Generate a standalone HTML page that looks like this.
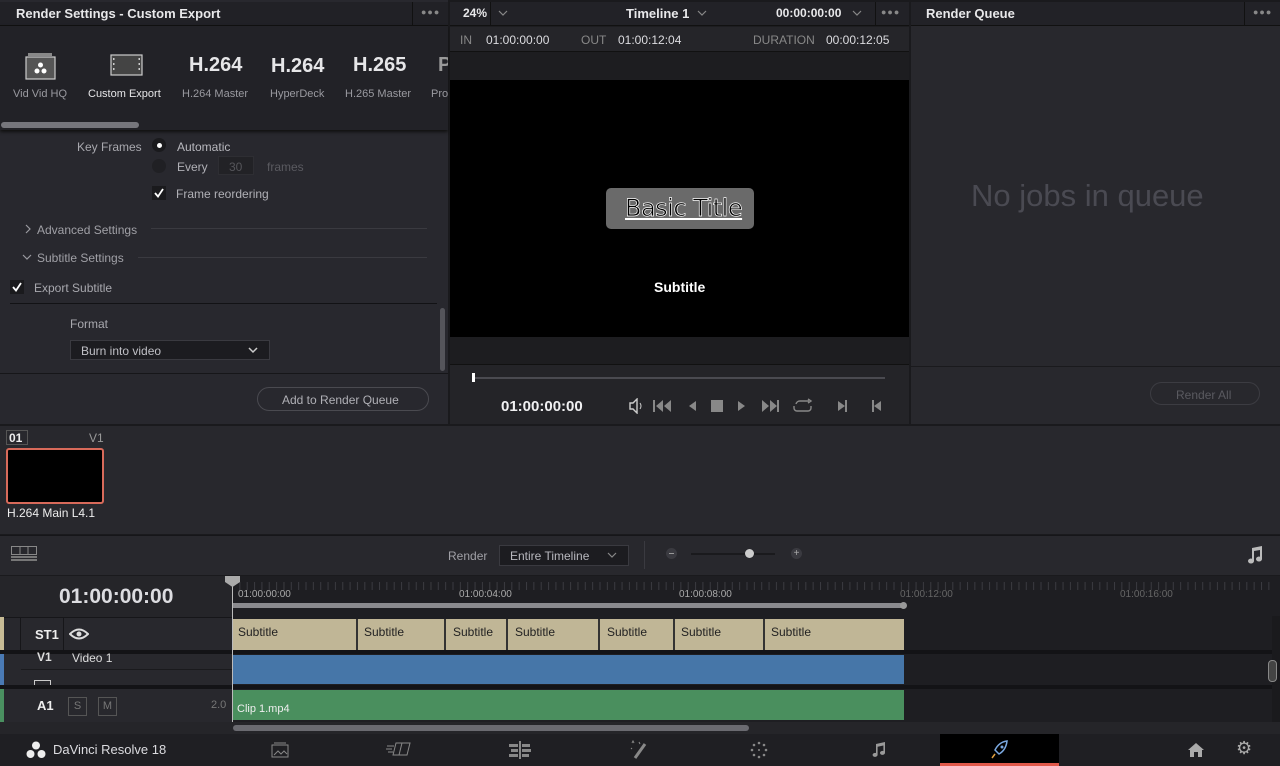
<!DOCTYPE html>
<html><head><meta charset="utf-8"><style>
*{margin:0;padding:0;box-sizing:border-box}
body{width:1280px;height:766px;overflow:hidden;background:#1a1a1d;font-family:"Liberation Sans",sans-serif;color:#c8c8cc;position:relative;font-size:12px}
.a{position:absolute}
.t{position:absolute;white-space:nowrap}
</style></head><body>
<!-- left panel -->
<div class="a" style="left:0;top:0;width:448px;height:424px;background:#28282e"></div>
<div class="a" style="left:0;top:2px;width:448px;height:24px;background:#212126;border-bottom:1px solid #111"></div>
<div class="t" style="left:16px;top:6px;font-size:13px;font-weight:bold;color:#e8e8ea">Render Settings - Custom Export</div>
<div class="a" style="left:412px;top:2px;width:1px;height:24px;background:#111"></div>
<div class="t" style="left:421px;top:7px;color:#888;font-size:9px;letter-spacing:1px">●●●</div>
<div class="a" style="left:0;top:26px;width:448px;height:104px;background:#222227;box-shadow:0 2px 3px #111"></div>
<svg class="a" style="left:25px;top:52px" width="32" height="28"><rect x="3" y="1" width="24" height="3" fill="#888"/><rect x="1" y="5" width="29" height="22" fill="#555" stroke="#ccc" stroke-width="1.2"/><circle cx="15.5" cy="13" r="2.5" fill="#fff"/><circle cx="12" cy="19" r="2.5" fill="#fff"/><circle cx="19" cy="19" r="2.5" fill="#fff"/></svg>
<svg class="a" style="left:110px;top:54px" width="34" height="22"><rect x="1" y="1" width="31" height="20" fill="#444" stroke="#ccc" stroke-width="1.2"/><g fill="#ccc"><rect x="3" y="4" width="1.5" height="2"/><rect x="3" y="9" width="1.5" height="2"/><rect x="3" y="14" width="1.5" height="2"/><rect x="28.5" y="4" width="1.5" height="2"/><rect x="28.5" y="9" width="1.5" height="2"/><rect x="28.5" y="14" width="1.5" height="2"/></g></svg>
<div class="t" style="left:13px;top:88px;font-size:11px;color:#9a9aa0">Vid Vid HQ</div>
<div class="t" style="left:88px;top:88px;font-size:11px;color:#e6e6e8">Custom Export</div>
<div class="t" style="left:189px;top:54px;font-size:20px;color:#e6e6e8;font-weight:bold">H.264</div>
<div class="t" style="left:182px;top:88px;font-size:11px;color:#9a9aa0">H.264 Master</div>
<div class="t" style="left:271px;top:55px;font-size:20px;color:#e6e6e8;font-weight:bold">H.264</div>
<div class="t" style="left:270px;top:88px;font-size:11px;color:#9a9aa0">HyperDeck</div>
<div class="t" style="left:353px;top:54px;font-size:20px;color:#e6e6e8;font-weight:bold">H.265</div>
<div class="t" style="left:345px;top:88px;font-size:11px;color:#9a9aa0">H.265 Master</div>
<div class="t" style="left:438px;top:54px;font-size:20px;color:#999;font-weight:bold;width:10px;overflow:hidden">P</div>
<div class="t" style="left:431px;top:88px;font-size:11px;color:#9a9aa0;width:17px;overflow:hidden">Pro</div>
<div class="a" style="left:1px;top:122px;width:138px;height:6px;border-radius:3px;background:#76767c"></div>
<div class="t" style="left:77px;top:140px;color:#a8a8ae">Key Frames</div>
<div class="a" style="left:152px;top:138px;width:14px;height:14px;border-radius:50%;background:#1a1a1d"></div>
<div class="a" style="left:157px;top:143px;width:5px;height:5px;border-radius:50%;background:#fff"></div>
<div class="t" style="left:177px;top:140px;color:#b8b8be">Automatic</div>
<div class="a" style="left:152px;top:159px;width:14px;height:14px;border-radius:50%;background:#202024"></div>
<div class="t" style="left:177px;top:160px;color:#b0b0b6">Every</div>
<div class="a" style="left:218px;top:156px;width:36px;height:19px;background:#222226;border:1px solid #2e2e33"></div>
<div class="t" style="left:229px;top:160px;color:#55555a">30</div>
<div class="t" style="left:267px;top:160px;color:#5a5a60">frames</div>
<div class="a" style="left:152px;top:186px;width:14px;height:14px;background:#1a1a1d"></div>
<svg class="a" style="left:153px;top:187px" width="12" height="12"><path d="M2 6 L5 9.5 L10 2" stroke="#fff" stroke-width="1.8" fill="none"/></svg>
<div class="t" style="left:176px;top:187px;color:#b0b0b6">Frame reordering</div>
<svg class="a" style="left:24px;top:224px" width="8" height="10"><path d="M2 1 L6 5 L2 9" stroke="#9a9aa0" stroke-width="1.2" fill="none"/></svg>
<div class="t" style="left:37px;top:223px;color:#a0a0a6">Advanced Settings</div>
<div class="a" style="left:151px;top:228px;width:276px;height:1px;background:#3a3a40"></div>
<svg class="a" style="left:22px;top:253px" width="10" height="8"><path d="M1 2 L5 6 L9 2" stroke="#9a9aa0" stroke-width="1.2" fill="none"/></svg>
<div class="t" style="left:37px;top:251px;color:#a0a0a6">Subtitle Settings</div>
<div class="a" style="left:138px;top:257px;width:289px;height:1px;background:#3a3a40"></div>
<div class="a" style="left:10px;top:280px;width:14px;height:14px;background:#1a1a1d"></div>
<svg class="a" style="left:11px;top:281px" width="12" height="12"><path d="M2 6 L5 9.5 L10 2" stroke="#fff" stroke-width="1.8" fill="none"/></svg>
<div class="t" style="left:34px;top:281px;color:#a8a8ae">Export Subtitle</div>
<div class="a" style="left:10px;top:303px;width:427px;height:1px;background:#121215"></div>
<div class="t" style="left:70px;top:317px;color:#a8a8ae">Format</div>
<div class="a" style="left:70px;top:340px;width:200px;height:20px;background:#1c1c20;border:1px solid #3a3a40"></div>
<div class="t" style="left:81px;top:344px;color:#c0c0c6">Burn into video</div>
<svg class="a" style="left:248px;top:346px" width="10" height="8"><path d="M1 2 L5 6 L9 2" stroke="#ccc" stroke-width="1.5" fill="none"/></svg>
<div class="a" style="left:440px;top:308px;width:5px;height:63px;border-radius:3px;background:#55555b"></div>
<div class="a" style="left:0;top:373px;width:448px;height:1px;background:#161619"></div>
<div class="a" style="left:257px;top:387px;width:172px;height:24px;border:1px solid #4a4a50;border-radius:12px"></div>
<div class="t" style="left:282px;top:393px;color:#b0b0b6">Add to Render Queue</div>

<!-- viewer -->
<div class="a" style="left:450px;top:2px;width:459px;height:422px;background:#1d1d20"></div>
<div class="a" style="left:450px;top:2px;width:459px;height:24px;background:#222227;border-bottom:1px solid #111"></div>
<div class="t" style="left:463px;top:6px;color:#e8e8ea;font-weight:bold">24%</div>
<svg class="a" style="left:498px;top:10px" width="10" height="7"><path d="M1 1 L5 5 L9 1" stroke="#888" stroke-width="1.2" fill="none"/></svg>
<div class="a" style="left:490px;top:2px;width:1px;height:24px;background:#111"></div>
<div class="t" style="left:626px;top:6px;color:#e8e8ea;font-weight:bold;font-size:13px">Timeline 1</div>
<svg class="a" style="left:697px;top:10px" width="10" height="7"><path d="M1 1 L5 5 L9 1" stroke="#888" stroke-width="1.2" fill="none"/></svg>
<div class="t" style="left:776px;top:6px;color:#e8e8ea;font-weight:bold">00:00:00:00</div>
<svg class="a" style="left:852px;top:10px" width="10" height="7"><path d="M1 1 L5 5 L9 1" stroke="#888" stroke-width="1.2" fill="none"/></svg>
<div class="a" style="left:875px;top:2px;width:1px;height:24px;background:#111"></div>
<div class="t" style="left:881px;top:7px;color:#888;font-size:9px;letter-spacing:1px">●●●</div>
<div class="a" style="left:450px;top:27px;width:459px;height:25px;background:#252529;border-bottom:1px solid #111"></div>
<div class="t" style="left:460px;top:33px;color:#888">IN</div>
<div class="t" style="left:486px;top:33px;color:#dcdce0">01:00:00:00</div>
<div class="t" style="left:581px;top:33px;color:#888">OUT</div>
<div class="t" style="left:618px;top:33px;color:#dcdce0">01:00:12:04</div>
<div class="t" style="left:753px;top:33px;color:#888">DURATION</div>
<div class="t" style="left:826px;top:33px;color:#dcdce0">00:00:12:05</div>
<div class="a" style="left:450px;top:80px;width:459px;height:257px;background:#000"></div>
<div class="a" style="left:606px;top:188px;width:148px;height:41px;border-radius:5px;background:#6a6a6a"></div>
<div class="t" style="left:625px;top:194px;font-size:24px;color:#000;-webkit-text-stroke:0.7px #fff;text-decoration:underline;font-family:'DejaVu Sans',sans-serif;letter-spacing:-0.5px">Basic Title</div>
<div class="t" style="left:654px;top:279px;font-size:14px;color:#fff;font-weight:bold">Subtitle</div>
<div class="a" style="left:450px;top:364px;width:459px;height:60px;background:#242428;border-top:1px solid #111"></div>
<div class="a" style="left:475px;top:377px;width:410px;height:2px;background:#4a4a50"></div>
<div class="a" style="left:472px;top:373px;width:3px;height:9px;background:#fff"></div>
<div class="t" style="left:501px;top:398px;color:#f0f0f2;font-size:15px;font-weight:bold">01:00:00:00</div>
<svg class="a" style="left:628px;top:398px" width="262" height="16" fill="#888">
<path d="M2 5 h3 l4 -4 v14 l-4 -4 h-3z" fill="none" stroke="#ccc" stroke-width="1.4"/><path d="M12 5 q2 3 0 6" stroke="#ccc" fill="none"/>
<rect x="25" y="2" width="2" height="12"/><path d="M35 2 v12 l-7 -6z M43 2 v12 l-7 -6z"/>
<path d="M68 3 v10 l-7 -5z"/>
<rect x="83" y="2" width="12" height="12"/>
<path d="M110 3 v10 l7 -5z"/>
<path d="M134 2 v12 l7 -6z M142 2 v12 l7 -6z"/><rect x="149" y="2" width="2" height="12"/>
<path d="M168 6 a4 4 0 0 1 4 -3 h9 M180 1 l3 2 -3 2 M166 8 v2 a3 3 0 0 0 3 3 h11 a3 3 0 0 0 3 -3 v-2" stroke="#888" stroke-width="1.4" fill="none"/>
<path d="M210 3 v10 l7 -5z"/><rect x="217" y="2" width="2" height="12"/>
<rect x="244" y="2" width="2" height="12"/><path d="M253 3 v10 l-7 -5z"/>
</svg>

<!-- render queue -->
<div class="a" style="left:911px;top:2px;width:369px;height:422px;background:#28282d"></div>
<div class="a" style="left:911px;top:2px;width:369px;height:24px;background:#222227;border-bottom:1px solid #111"></div>
<div class="t" style="left:926px;top:6px;color:#e8e8ea;font-weight:bold;font-size:13px">Render Queue</div>
<div class="a" style="left:1244px;top:2px;width:1px;height:24px;background:#111"></div>
<div class="t" style="left:1253px;top:7px;color:#888;font-size:9px;letter-spacing:1px">●●●</div>
<div class="t" style="left:971px;top:178px;font-size:31px;color:#4a4a52">No jobs in queue</div>
<div class="a" style="left:911px;top:366px;width:369px;height:1px;background:#1a1a1d"></div>
<div class="a" style="left:1150px;top:382px;width:110px;height:23px;border:1px solid #3c3c42;border-radius:12px"></div>
<div class="t" style="left:1176px;top:388px;color:#5a5a60">Render All</div>

<!-- clips strip -->
<div class="a" style="left:0;top:426px;width:1280px;height:108px;background:#28282d"></div>
<div class="a" style="left:6px;top:430px;width:22px;height:15px;border:1px solid #555"></div>
<div class="t" style="left:9px;top:431px;color:#eee;font-weight:bold">01</div>
<div class="t" style="left:89px;top:431px;color:#999">V1</div>
<div class="a" style="left:6px;top:448px;width:98px;height:56px;background:#000;border:2px solid #d86a5a;border-radius:3px"></div>
<div class="t" style="left:7px;top:506px;color:#eee">H.264 Main L4.1</div>

<!-- timeline toolbar -->
<div class="a" style="left:0;top:535px;width:1280px;height:40px;background:#28282d;border-top:1px solid #161619"></div>
<svg class="a" style="left:11px;top:546px" width="26" height="16"><rect x="0.5" y="0.5" width="25" height="8" fill="none" stroke="#888"/><line x1="9" y1="0" x2="9" y2="8" stroke="#888"/><line x1="17" y1="0" x2="17" y2="8" stroke="#888"/><rect x="0" y="10" width="26" height="2" fill="#777"/><rect x="0" y="13" width="26" height="2" fill="#777"/></svg>
<div class="t" style="left:448px;top:549px;color:#a0a0a6">Render</div>
<div class="a" style="left:499px;top:545px;width:130px;height:21px;background:#1c1c20;border:1px solid #3a3a40"></div>
<div class="t" style="left:510px;top:549px;color:#b8b8be">Entire Timeline</div>
<svg class="a" style="left:607px;top:552px" width="10" height="7"><path d="M1 1 L5 5 L9 1" stroke="#888" stroke-width="1.2" fill="none"/></svg>
<div class="a" style="left:644px;top:541px;width:1px;height:28px;background:#3a3a40"></div>
<div class="a" style="left:666px;top:548px;width:11px;height:11px;border-radius:50%;background:#3a3a40"></div>
<div class="a" style="left:669px;top:553px;width:5px;height:1px;background:#999"></div>
<div class="a" style="left:691px;top:553px;width:84px;height:2px;background:#1a1a1d"></div>
<div class="a" style="left:745px;top:549px;width:9px;height:9px;border-radius:50%;background:#ccc"></div>
<div class="a" style="left:791px;top:548px;width:11px;height:11px;border-radius:50%;background:#3a3a40;color:#aaa;font-size:10px;text-align:center;line-height:11px">+</div>
<svg class="a" style="left:1246px;top:546px" width="18" height="18" fill="#bbb"><path d="M6 2 L16 0 V13 a3 2.5 0 1 1 -2 -2.3 V4 L8 5 V15 a3 2.5 0 1 1 -2 -2.3z"/></svg>

<!-- timeline -->
<div class="a" style="left:0;top:576px;width:232px;height:150px;background:#252529"></div>
<div class="t" style="left:59px;top:585px;font-size:21px;color:#dcdce0;font-weight:bold">01:00:00:00</div>
<div class="a" style="left:232px;top:576px;width:1048px;height:40px;background:#1e1e22"></div>
<svg class="a" style="left:232px;top:576px" width="1040" height="16">
<pattern id="tk" width="7.35" height="16" patternUnits="userSpaceOnUse"><line x1="0.5" y1="6" x2="0.5" y2="14" stroke="#3a3a40"/></pattern><rect width="1040" height="16" fill="url(#tk)"/></svg>
<div class="t" style="left:238px;top:589px;font-size:10px;color:#aaa">01:00:00:00</div>
<div class="t" style="left:459px;top:589px;font-size:10px;color:#aaa">01:00:04:00</div>
<div class="t" style="left:679px;top:589px;font-size:10px;color:#aaa">01:00:08:00</div>
<div class="t" style="left:900px;top:589px;font-size:10px;color:#666">01:00:12:00</div>
<div class="t" style="left:1120px;top:589px;font-size:10px;color:#666">01:00:16:00</div>
<div class="a" style="left:232px;top:603px;width:672px;height:5px;background:#8a8a8e"></div>
<div class="a" style="left:900px;top:602px;width:7px;height:7px;border-radius:50%;background:#999"></div>
<div class="a" style="left:232px;top:616px;width:1040px;height:110px;background:#1e1e22"></div>
<div class="a" style="left:0;top:617px;width:232px;height:33px;background:#28282d;border-top:1px solid #161619"></div>
<div class="a" style="left:0;top:617px;width:4px;height:33px;background:#c8bc96"></div>
<div class="a" style="left:20px;top:617px;width:1px;height:108px;background:#161619"></div>
<div class="a" style="left:63px;top:617px;width:1px;height:108px;background:#161619"></div>
<div class="t" style="left:35px;top:627px;color:#eee;font-weight:bold;font-size:13px">ST1</div>
<svg class="a" style="left:69px;top:627px" width="20" height="14"><path d="M1 7 Q10 -2 19 7 Q10 16 1 7z" fill="none" stroke="#ddd" stroke-width="2"/><circle cx="10" cy="7" r="2.5" fill="#ddd"/></svg>
<div class="a" style="left:0;top:650px;width:1272px;height:4px;background:#131316"></div>
<div class="a" style="left:0;top:654px;width:232px;height:31px;background:#28282d;overflow:hidden"></div>
<div class="a" style="left:0;top:654px;width:4px;height:31px;background:#4a7ab4"></div>
<div class="t" style="left:37px;top:650px;color:#ddd;font-weight:bold">V1</div>
<div class="t" style="left:72px;top:651px;color:#ddd">Video 1</div>
<div class="a" style="left:21px;top:669px;width:211px;height:1px;background:#1a1a1d"></div>
<div class="a" style="left:34px;top:680px;width:17px;height:5px;border:1px solid #ccc;border-bottom:none"></div>
<div class="a" style="left:0;top:685px;width:1272px;height:4px;background:#131316"></div>
<div class="a" style="left:0;top:689px;width:232px;height:33px;background:#28282d"></div>
<div class="a" style="left:0;top:689px;width:4px;height:33px;background:#4a9060"></div>
<div class="t" style="left:37px;top:698px;color:#eee;font-weight:bold;font-size:13px">A1</div>
<div class="a" style="left:68px;top:697px;width:19px;height:19px;border:1px solid #555;color:#777;font-size:11px;text-align:center;line-height:17px">S</div>
<div class="a" style="left:98px;top:697px;width:19px;height:19px;border:1px solid #555;color:#777;font-size:11px;text-align:center;line-height:17px">M</div>
<div class="t" style="left:211px;top:699px;color:#777;font-size:11px">2.0</div>
<!-- clips -->
<div class="a" style="left:233px;top:619px;width:671px;height:31px;background:#c0b696"></div>
<div class="a" style="left:356px;top:619px;width:2px;height:31px;background:#333"></div>
<div class="a" style="left:444px;top:619px;width:2px;height:31px;background:#333"></div>
<div class="a" style="left:506px;top:619px;width:2px;height:31px;background:#333"></div>
<div class="a" style="left:598px;top:619px;width:2px;height:31px;background:#333"></div>
<div class="a" style="left:673px;top:619px;width:2px;height:31px;background:#333"></div>
<div class="a" style="left:763px;top:619px;width:2px;height:31px;background:#333"></div>
<div class="t" style="left:238px;top:625px;color:#222">Subtitle</div>
<div class="t" style="left:364px;top:625px;color:#222">Subtitle</div>
<div class="t" style="left:453px;top:625px;color:#222">Subtitle</div>
<div class="t" style="left:515px;top:625px;color:#222">Subtitle</div>
<div class="t" style="left:607px;top:625px;color:#222">Subtitle</div>
<div class="t" style="left:681px;top:625px;color:#222">Subtitle</div>
<div class="t" style="left:771px;top:625px;color:#222">Subtitle</div>
<div class="a" style="left:233px;top:655px;width:671px;height:29px;background:#4676a8"></div>
<div class="a" style="left:233px;top:690px;width:671px;height:30px;background:#4a8f5e"></div>
<div class="t" style="left:237px;top:703px;color:#eee;font-size:11px">Clip 1.mp4</div>
<div class="a" style="left:232px;top:576px;width:1px;height:150px;background:#bbb"></div>
<svg class="a" style="left:225px;top:576px" width="16" height="12"><path d="M0 0 H15 V6 L7.5 11 L0 6z" fill="#aaa"/></svg>
<div class="a" style="left:1268px;top:660px;width:9px;height:22px;border:1px solid #888;border-radius:4px;background:#444"></div>
<div class="a" style="left:0;top:722px;width:1280px;height:12px;background:#252529"></div>
<div class="a" style="left:233px;top:725px;width:516px;height:6px;border-radius:3px;background:#6a6a70"></div>

<!-- bottom bar -->
<div class="a" style="left:0;top:734px;width:1280px;height:32px;background:#1f1f23"></div>
<svg class="a" style="left:26px;top:741px" width="20" height="18" fill="#eee"><circle cx="10" cy="4.5" r="4"/><circle cx="4.5" cy="13" r="4"/><circle cx="15.5" cy="13" r="4"/></svg>
<div class="t" style="left:53px;top:742px;color:#dcdce0;font-size:13px">DaVinci Resolve 18</div>
<svg class="a" style="left:271px;top:742px" width="18" height="16"><rect x="1" y="3" width="16" height="12" fill="none" stroke="#888"/><line x1="3" y1="1" x2="15" y2="1" stroke="#888"/><path d="M3 13 l4 -4 3 3 3 -3 3 3" stroke="#888" fill="none"/></svg>
<svg class="a" style="left:386px;top:741px" width="26" height="16"><path d="M10 2 h14 l-3 12 h-14z M16 2 l-3 12" stroke="#888" fill="none"/><path d="M1 5 h7 M0 8 h6 M2 11 h5" stroke="#888"/></svg>
<svg class="a" style="left:509px;top:741px" width="22" height="18" fill="#888"><rect x="10" y="0" width="2" height="18"/><rect x="0" y="3" width="9" height="3"/><rect x="13" y="3" width="8" height="3"/><rect x="2" y="8" width="7" height="3"/><rect x="13" y="8" width="9" height="3"/><rect x="0" y="13" width="9" height="3"/><rect x="13" y="13" width="7" height="3"/></svg>
<svg class="a" style="left:628px;top:740px" width="22" height="20"><path d="M17 4 L7 18" stroke="#888" stroke-width="3"/><path d="M4 3 l1 -2 1 2 M11 2 l1 2 M3 8 l1 1" stroke="#888"/></svg>
<svg class="a" style="left:749px;top:740px" width="20" height="20" fill="#888"><circle cx="10" cy="3" r="1.3"/><circle cx="15" cy="5" r="1.3"/><circle cx="17" cy="10" r="1.3"/><circle cx="15" cy="15" r="1.3"/><circle cx="10" cy="17" r="1.3"/><circle cx="5" cy="15" r="1.3"/><circle cx="3" cy="10" r="1.3"/><circle cx="5" cy="5" r="1.3"/><circle cx="10" cy="10" r="1"/></svg>
<svg class="a" style="left:872px;top:742px" width="14" height="16" fill="#999"><path d="M4 2 L13 0 V11 a2.5 2 0 1 1 -1.6 -2 V3.5 L5.6 4.8 V13 a2.5 2 0 1 1 -1.6 -2z"/></svg>
<div class="a" style="left:940px;top:734px;width:119px;height:32px;background:#000"></div>
<div class="a" style="left:940px;top:763px;width:119px;height:3px;background:#e0584a"></div>
<svg class="a" style="left:989px;top:740px" width="20" height="20"><path d="M18 1 Q10 2 6 10 L10 14 Q17 10 18 1z" fill="none" stroke="#7aa8e0" stroke-width="1.5"/><circle cx="13" cy="7" r="1.5" fill="#7aa8e0"/><path d="M6 14 L3 18" stroke="#e0a040" stroke-width="1.5"/></svg>
<svg class="a" style="left:1187px;top:742px" width="18" height="16" fill="#aaa"><path d="M9 1 L17 8 H15 V15 H11 V10 H7 V15 H3 V8 H1z"/></svg>
<div class="t" style="left:1236px;top:738px;color:#aaa;font-size:18px">⚙</div>
</body></html>
